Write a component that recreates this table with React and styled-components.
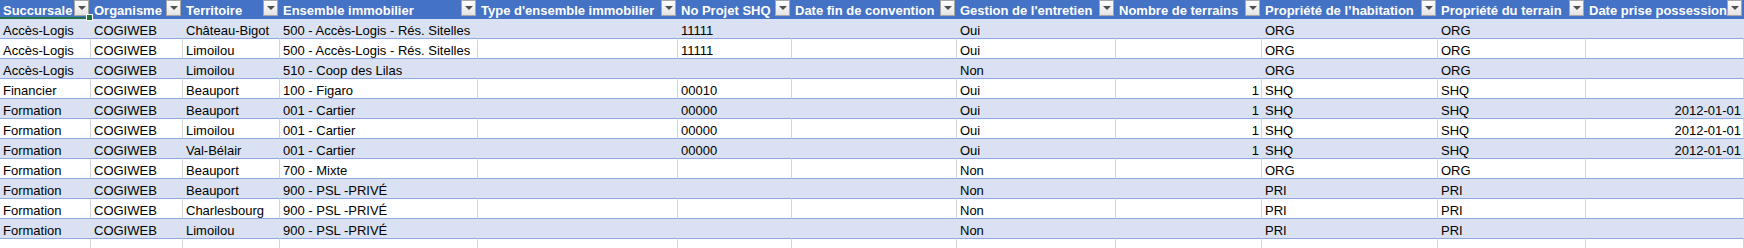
import React from "react";
import styled, { createGlobalStyle } from "styled-components";

const Global = createGlobalStyle`
  html, body {
    margin: 0;
    padding: 0;
    background: #ffffff;
    overflow: hidden;
  }
  body {
    font-family: "Liberation Sans", Arial, sans-serif;
    font-size: 13px;
    color: #000;
  }
`;

const columns = [
  { title: "Succursale", width: 91 },
  { title: "Organisme", width: 92 },
  { title: "Territoire", width: 97 },
  { title: "Ensemble immobilier", width: 198 },
  { title: "Type d'ensemble immobilier", width: 200 },
  { title: "No Projet SHQ", width: 114 },
  { title: "Date fin de convention", width: 165 },
  { title: "Gestion de l'entretien", width: 159 },
  { title: "Nombre de terrains", width: 146, align: "right" },
  { title: "Propriété de l’habitation", width: 176 },
  { title: "Propriété du terrain", width: 148 },
  { title: "Date prise possession", width: 158, align: "right" },
];

const rows = [
  ["Accès-Logis", "COGIWEB", "Château-Bigot", "500 - Accès-Logis - Rés. Sitelles", "", "11111", "", "Oui", "", "ORG", "ORG", ""],
  ["Accès-Logis", "COGIWEB", "Limoilou", "500 - Accès-Logis - Rés. Sitelles", "", "11111", "", "Oui", "", "ORG", "ORG", ""],
  ["Accès-Logis", "COGIWEB", "Limoilou", "510 - Coop des Lilas", "", "", "", "Non", "", "ORG", "ORG", ""],
  ["Financier", "COGIWEB", "Beauport", "100 - Figaro", "", "00010", "", "Oui", "1", "SHQ", "SHQ", ""],
  ["Formation", "COGIWEB", "Beauport", "001 - Cartier", "", "00000", "", "Oui", "1", "SHQ", "SHQ", "2012-01-01"],
  ["Formation", "COGIWEB", "Limoilou", "001 - Cartier", "", "00000", "", "Oui", "1", "SHQ", "SHQ", "2012-01-01"],
  ["Formation", "COGIWEB", "Val-Bélair", "001 - Cartier", "", "00000", "", "Oui", "1", "SHQ", "SHQ", "2012-01-01"],
  ["Formation", "COGIWEB", "Beauport", "700 - Mixte", "", "", "", "Non", "", "ORG", "ORG", ""],
  ["Formation", "COGIWEB", "Beauport", "900 - PSL -PRIVÉ", "", "", "", "Non", "", "PRI", "PRI", ""],
  ["Formation", "COGIWEB", "Charlesbourg", "900 - PSL -PRIVÉ", "", "", "", "Non", "", "PRI", "PRI", ""],
  ["Formation", "COGIWEB", "Limoilou", "900 - PSL -PRIVÉ", "", "", "", "Non", "", "PRI", "PRI", ""],
];

const Sheet = styled.div`
  position: relative;
  display: grid;
  grid-template-columns: ${(p) => p.$template};
  width: 1744px;
`;

const HeaderCell = styled.div`
  display: flex;
  align-items: flex-start;
  justify-content: space-between;
  height: 19px;
  background: #4472c4;
  color: #ffffff;
  font-weight: bold;
  overflow: hidden;
`;

const HeaderLabel = styled.span`
  flex: 1 1 auto;
  min-width: 0;
  padding: 3px 0 0 3px;
  line-height: 15px;
  white-space: nowrap;
  overflow: hidden;
`;

const FilterButton = styled.span`
  flex: 0 0 auto;
  box-sizing: border-box;
  width: 15px;
  height: 16px;
  margin: 0 2px 0 0;
  border: 1px solid #a6a6a6;
  background: linear-gradient(#ffffff, #e4e4e4);
  display: flex;
  align-items: center;
  justify-content: center;

  &::after {
    content: "";
    display: block;
    width: 0;
    height: 0;
    border-left: 4px solid transparent;
    border-right: 4px solid transparent;
    border-top: 4px solid #505050;
  }
`;

const Cell = styled.div`
  box-sizing: border-box;
  height: 20px;
  padding: 4px ${(p) => (p.$align === "right" ? "2px" : "0")} 0
    ${(p) => (p.$align === "right" ? "0" : "3px")};
  line-height: 15px;
  white-space: nowrap;
  overflow: hidden;
  text-align: ${(p) => p.$align || "left"};
  background: ${(p) => (p.$band ? "#d9e1f2" : "#ffffff")};
  border-right: 1px solid ${(p) => (p.$band ? "#d9e1f2" : "#d4d4d4")};
  border-bottom: 1px solid ${(p) => (p.$last ? "transparent" : "#8ea9db")};
`;

const SelectionEdge = styled.div`
  position: absolute;
  left: 0;
  top: 17px;
  width: 89px;
  height: 2px;
  background: #217346;
`;

const FillHandle = styled.div`
  position: absolute;
  left: 86px;
  top: 14px;
  width: 5px;
  height: 5px;
  background: #217346;
  border: 1px solid #ffffff;
`;

export default function App() {
  const template = columns.map((c) => `${c.width}px`).join(" ");
  return (
    <>
      <Global />
      <Sheet $template={template}>
        {columns.map((c) => (
          <HeaderCell key={c.title}>
            <HeaderLabel>{c.title}</HeaderLabel>
            <FilterButton />
          </HeaderCell>
        ))}
        {rows.map((r, i) =>
          r.map((v, j) => (
            <Cell key={`${i}-${j}`} $band={i % 2 === 0} $align={columns[j].align}>
              {v}
            </Cell>
          ))
        )}
        {columns.map((c, j) => (
          <Cell key={`empty-${j}`} $last $align={c.align} />
        ))}
        <SelectionEdge />
        <FillHandle />
      </Sheet>
    </>
  );
}
